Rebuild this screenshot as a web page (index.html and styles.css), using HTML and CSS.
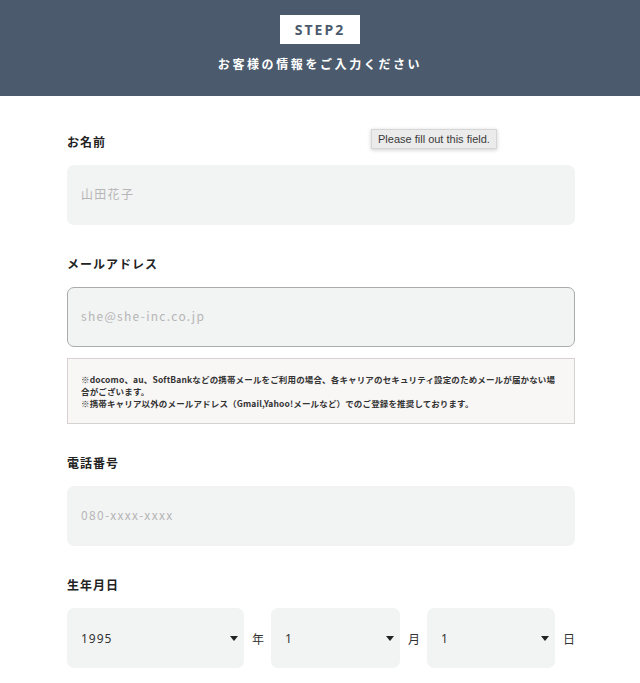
FILE: index.html
```html
<!DOCTYPE html>
<html>

<head>
    <title>STEP2</title>
    <meta charset="utf-8">
    <link rel="stylesheet" href="styles.css">
</head>

<body>
    <div class="header">
        <div class="step">STEP2</div>
        <p class="lead">お客様の情報をご入力ください</p>
    </div>
    <form class="form">
        <div class="field first">
            <label class="label">お名前</label>
            <input class="input" type="text" placeholder="山田花子">
            <div class="tooltip">Please fill out this field.</div>
        </div>
        <div class="field">
            <label class="label">メールアドレス</label>
            <input class="input focus" type="email" placeholder="she@she-inc.co.jp">
            <div class="note">
                ※docomo、au、SoftBankなどの携帯メールをご利用の場合、各キャリアのセキュリティ設定のためメールが届かない場合がございます。<br>
                ※携帯キャリア以外のメールアドレス（Gmail,Yahoo!メールなど）でのご登録を推奨しております。
            </div>
        </div>
        <div class="field">
            <label class="label">電話番号</label>
            <input class="input" type="tel" placeholder="080-xxxx-xxxx">
        </div>
        <div class="field">
            <label class="label">生年月日</label>
            <div class="birth">
                <div class="select year">
                    <select>
                        <option>1995</option>
                    </select>
                </div>
                <span class="unit">年</span>
                <div class="select month">
                    <select>
                        <option>1</option>
                    </select>
                </div>
                <span class="unit">月</span>
                <div class="select day">
                    <select>
                        <option>1</option>
                    </select>
                </div>
                <span class="unit last">日</span>
            </div>
        </div>
    </form>
</body>

</html>
```

FILE: styles.css
```css
body {
    margin: 0;
    font-family: "Noto Sans CJK JP", "Noto Sans", sans-serif;
    color: #222;
    background-color: #fff;
}

.header {
    background-color: #4b5b6d;
    height: 96px;
    display: flex;
    flex-direction: column;
    align-items: center;
    padding-top: 15px;
    box-sizing: border-box;
}

.step {
    width: 80px;
    height: 29px;
    background-color: #fff;
    color: #4b5b6d;
    font-family: "Noto Sans", sans-serif;
    font-weight: bold;
    font-size: 14px;
    letter-spacing: 2px;
    line-height: 29px;
    text-align: center;
}

.lead {
    margin: 11px 0 0;
    color: #fff;
    font-size: 12px;
    font-weight: bold;
    letter-spacing: 2.6px;
    line-height: 18px;
}

.form {
    width: 508px;
    margin-left: 67px;
    padding-top: 37px;
}

.field {
    margin-bottom: 30px;
}

.field.first {
    position: relative;
}

.label {
    display: block;
    font-size: 12px;
    font-weight: bold;
    letter-spacing: 1px;
    line-height: 18px;
    margin-bottom: 14px;
}

.input {
    display: block;
    width: 100%;
    height: 60px;
    box-sizing: border-box;
    border: none;
    border-radius: 7px;
    background-color: #f2f3f3;
    padding: 0 14px 3px;
    font-family: "Noto Sans CJK JP", "Noto Sans", sans-serif;
    font-size: 12px;
    letter-spacing: 1.3px;
    outline: none;
}

.input::placeholder {
    color: #b6b6b6;
}

.input.focus {
    border: 1px solid #a9abad;
    padding-left: 13px;
}

.tooltip {
    position: absolute;
    left: 304px;
    top: -4px;
    padding: 2px 6px;
    background-color: #ebebeb;
    border: 1px solid #d6d6d6;
    box-shadow: 0 1px 4px rgba(0, 0, 0, 0.2);
    font-family: "Liberation Sans", Arial, sans-serif;
    font-size: 11px;
    line-height: 14px;
    color: #3a3a3a;
}

.note {
    margin-top: 11px;
    border: 1px solid #d8d1d1;
    background-color: #f9f7f6;
    padding: 14px 13px;
    font-size: 8.5px;
    font-weight: bold;
    line-height: 12px;
    letter-spacing: 0.15px;
    color: #333;
}

.birth {
    display: flex;
    align-items: center;
}

.select {
    position: relative;
    height: 60px;
}

.select.year {
    width: 177px;
}

.select.month {
    width: 129px;
}

.select.day {
    width: 128px;
}

.select select {
    appearance: none;
    -webkit-appearance: none;
    width: 100%;
    height: 100%;
    border: none;
    border-radius: 7px;
    background-color: #f2f3f3;
    padding: 0 14px;
    font-family: "Noto Sans", sans-serif;
    font-size: 12px;
    letter-spacing: 1px;
    color: #333;
    outline: none;
}

.select::after {
    content: "";
    position: absolute;
    right: 6px;
    top: 28px;
    border-left: 4px solid transparent;
    border-right: 4px solid transparent;
    border-top: 5px solid #222;
}

.unit {
    font-size: 12px;
    color: #333;
    margin: 0 7px 0 8px;
}

.unit.last {
    margin-right: 0;
}
```
